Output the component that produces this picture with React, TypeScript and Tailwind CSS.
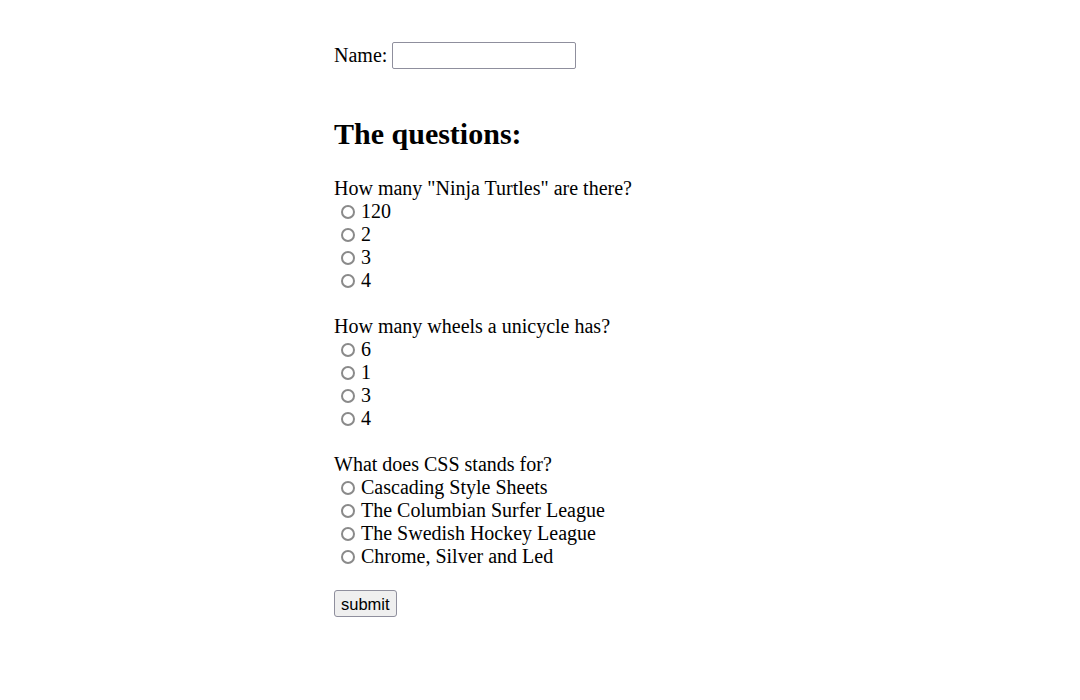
import React from "react";

interface Question {
  text: string;
  options: string[];
}

const questions: Question[] = [
  { text: 'How many "Ninja Turtles" are there?', options: ["120", "2", "3", "4"] },
  { text: "How many wheels a unicycle has?", options: ["6", "1", "3", "4"] },
  {
    text: "What does CSS stands for?",
    options: [
      "Cascading Style Sheets",
      "The Columbian Surfer League",
      "The Swedish Hockey League",
      "Chrome, Silver and Led",
    ],
  },
];

const QuestionBlock = ({ q, idx }: { q: Question; idx: number }) => (
  <div className="mb-[23px]">
    <p className="leading-[23px]">{q.text}</p>
    {q.options.map((opt, i) => (
      <label key={i} className="flex items-center h-[23px] leading-[23px]">
        <input
          type="radio"
          name={`q${idx}`}
          className="appearance-none shrink-0 w-[14px] h-[14px] ml-[7px] mr-[6px] mt-[1px] rounded-full border-2 border-[#8a8a8a] bg-white checked:border-[4px] checked:border-[#0075ff]"
        />
        <span>{opt}</span>
      </label>
    ))}
  </div>
);

export default function App() {
  return (
    <div className="min-h-[700px] bg-white text-black font-['Liberation_Serif',serif] text-[20px]">
      <form className="w-[412px] mx-auto pt-[42px]" onSubmit={(e) => e.preventDefault()}>
        <div className="flex items-center h-[27px]">
          <label htmlFor="name" className="mr-[5px] leading-[23px]">
            Name:
          </label>
          <input
            id="name"
            type="text"
            className="w-[184px] h-[27px] border border-[#8f8f9d] rounded-[2px] bg-white px-[2px] text-[16px]"
          />
        </div>

        <h2 className="mt-[48px] mb-[26px] text-[30px] font-bold leading-[34px]">
          The questions:
        </h2>

        {questions.map((q, idx) => (
          <QuestionBlock key={idx} q={q} idx={idx} />
        ))}

        <button
          type="submit"
          className="block -mt-[1px] h-[27px] px-[6px] bg-[#efefef] border border-[#8f8f9d] rounded-[3px] font-['Liberation_Sans',Arial,sans-serif] text-[16.5px] leading-[20px]"
        >
          submit
        </button>
      </form>
    </div>
  );
}
